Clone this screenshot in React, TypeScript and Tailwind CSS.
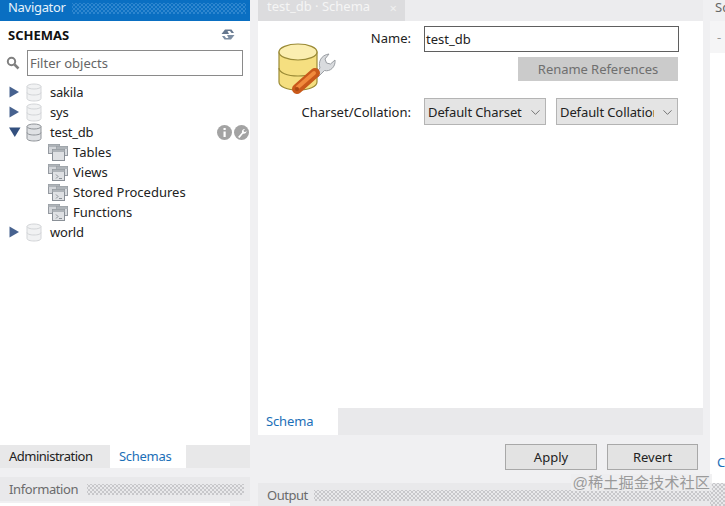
import { ChevronDown } from "lucide-react";

const dots =
  "bg-[radial-gradient(#c6c6c8_0.7px,transparent_0.8px),radial-gradient(#c6c6c8_0.7px,transparent_0.8px)] bg-[length:4px_4px] bg-[position:0_0,2px_2px]";

const blueDots =
  "bg-[radial-gradient(#3188d0_0.7px,transparent_0.8px),radial-gradient(#3188d0_0.7px,transparent_0.8px)] bg-[length:4px_4px] bg-[position:0_0,2px_2px]";

function Arrow({ open }: { open?: boolean }) {
  return (
    <svg width="12" height="12" viewBox="0 0 12 12" className="shrink-0">
      {open ? <path d="M0 1.5h11.5L5.8 11z" fill="#33507f" /> : <path d="M0.500 0.500v11L10 6z" fill="#47628f" />}
    </svg>
  );
}

function Db({ active }: { active?: boolean }) {
  const stroke = active ? "#8f9398" : "#d3d5d8";
  const fill = active ? "#dfe1e4" : "#f1f2f3";
  return (
    <svg width="16" height="19" viewBox="0 0 16 19" className="shrink-0">
      <path d="M1 3.5v12c0 1.5 3 2.5 7 2.5s7-1 7-2.5v-12z" fill={fill} stroke={stroke} />
      <ellipse cx="8" cy="3.5" rx="7" ry="2.5" fill={fill} stroke={stroke} />
      <path d="M1 9.5c0 1.5 3 2.5 7 2.5s7-1 7-2.5" fill="none" stroke={stroke} />
    </svg>
  );
}

function Folder({ glyph }: { glyph?: boolean }) {
  return (
    <svg width="20" height="17" viewBox="0 0 20 17" className="shrink-0">
      <rect x="0.5" y="0.5" width="11" height="9" fill="#d2d5d9" stroke="#959aa1" />
      <rect x="0.5" y="0.5" width="11" height="2.5" fill="#aeb3b8" />
      <rect x="8.5" y="2.5" width="11" height="9" fill="#d9dce0" stroke="#959aa1" />
      <rect x="8.5" y="2.5" width="11" height="2.5" fill="#aeb3b8" />
      <rect x="4.5" y="5.5" width="12" height="11" fill="#dfe1e4" stroke="#8a9097" />
      <rect x="4.5" y="5.5" width="12" height="2.5" fill="#aeb3b8" />
      {glyph && <path d="M8 10.5l2 2-2 2M11 14.5h3" fill="none" stroke="#8a9097" />}
    </svg>
  );
}

function SchemaIcon() {
  return (
    <svg width="58" height="52" viewBox="0 0 58 52">
      <path d="M1 9v30c0 4.500 8 8 19 8s19-3.500 19-8V9z" fill="#f5df80" stroke="#9a8a35" strokeWidth="1.200" />
      <ellipse cx="20" cy="9" rx="19" ry="8" fill="#fbeeb0" stroke="#9a8a35" strokeWidth="1.200" />
      <path d="M1 25c0 4.500 8 8 19 8s19-3.500 19-8" fill="none" stroke="#9a8a35" strokeWidth="1.200" />
      <path
        d="M35 33l7-8c-2-6 1-13 9-14l-4 5 1.500 4 4 1 4.500-4c.8 7-5 12-10.500 10.500l-7 7z"
        fill="#d9dbde"
        stroke="#9a9ea3"
      />
      <path d="M19 46l18-16" stroke="#c9591a" strokeWidth="10" strokeLinecap="round" />
      <path d="M20 44l16-14" stroke="#f08a3c" strokeWidth="4" strokeLinecap="round" />
      <circle cx="19" cy="46" r="2" fill="#a84812" />
    </svg>
  );
}

function TreeRow({ name, open, icons }: { name: string; open?: boolean; icons?: boolean }) {
  return (
    <div className="flex h-5 items-center pl-[9px] pr-px">
      <Arrow open={open} />
      <span className="ml-[5px]">
        <Db active={open} />
      </span>
      <span className="ml-2 flex-1 tracking-[-0.2px]">{name}</span>
      {icons && (
        <span className="flex gap-[2px]">
          <svg width="15" height="15" viewBox="0 0 15 15">
            <circle cx="7.500" cy="7.500" r="7.500" fill="#a3a3a3" />
            <path d="M6.500 3h2.200v2H6.500zM6.500 6.500h2.200V12H6.500z" fill="#fff" />
          </svg>
          <svg width="15" height="15" viewBox="0 0 15 15">
            <circle cx="7.500" cy="7.500" r="7.500" fill="#a3a3a3" />
            <path d="M4 12l4-4.500c-.5-2 1-3.800 3.200-3.500L9.500 5.500l.5 1.200 1.300.3 1.200-1.300c.2 2-1.500 3.500-3.500 3L5.500 13z" fill="#fff" />
          </svg>
        </span>
      )}
    </div>
  );
}

function ChildRow({ name, glyph }: { name: string; glyph?: boolean }) {
  return (
    <div className="flex h-5 items-center pl-12">
      <Folder glyph={glyph} />
      <span className="ml-[5px]">{name}</span>
    </div>
  );
}

function FakeSelect({ label }: { label: string }) {
  return (
    <div className="flex h-[27px] w-[122px] items-center border border-[#b4b4b4] bg-[#e4e4e4] pl-[3px] pr-[2px] pt-px">
      <span className="flex-1 overflow-hidden whitespace-nowrap tracking-[-0.1px]">{label}</span>
      <ChevronDown size={15} strokeWidth={1.25} className="ml-[6px] shrink-0 text-[#555]" />
    </div>
  );
}

export default function App() {
  return (
    <div className="relative flex h-[506px] w-[725px] overflow-hidden bg-[#f0f0f2] font-['Noto_Sans',sans-serif] text-[13px] leading-none text-[#222]">
      {/* navigator */}
      <aside className="flex h-full w-[250px] shrink-0 flex-col">
        <div className="flex h-[21px] shrink-0 items-start gap-[6px] bg-[#0a6fc2] pl-2 pr-1 pt-px text-[#e6f2fb]">
          <span className="tracking-[-0.3px]">Navigator</span>
          <div className={`mt-[2px] h-[11px] flex-1 ${blueDots}`} />
        </div>
        <div className="flex flex-1 flex-col bg-white">
          <div className="flex h-[29px] items-center justify-between pl-2 pr-[15px]">
            <span className="font-bold text-[#111]">SCHEMAS</span>
            <svg width="14" height="13" viewBox="0 0 14 13" className="-mt-[3px]">
              <path d="M0.500 6L4 1.500h6.500L13 5h-2.500L9 3H6.500L8 6z" fill="#66788f" />
              <path d="M13.500 7L10 11.500H3.500L1 8h2.500L5 10h2.500L6 7z" fill="#7d8ea3" />
            </svg>
          </div>
          <div className="flex items-center pl-[6px]">
            <svg width="14" height="14" viewBox="0 0 14 14" className="shrink-0">
              <circle cx="5.500" cy="5.500" r="3.700" fill="none" stroke="#808080" strokeWidth="2" />
              <path d="M8.500 8.500L12.500 12.500" stroke="#808080" strokeWidth="2.500" />
            </svg>
            <div className="ml-[7px] flex h-[26px] w-[216px] items-center border border-[#8a8a8a] px-[2px] text-[#666]">
              Filter objects
            </div>
          </div>
          <div className="mt-[6px]">
            <TreeRow name="sakila" />
            <TreeRow name="sys" />
            <TreeRow name="test_db" open icons />
            <ChildRow name="Tables" />
            <ChildRow name="Views" glyph />
            <ChildRow name="Stored Procedures" glyph />
            <ChildRow name="Functions" glyph />
            <TreeRow name="world" />
          </div>
        </div>
        <div className="flex h-[23px] shrink-0 bg-[#e8e8e9]">
          <div className="flex w-[110px] items-center pl-[9px] tracking-[-0.5px]">Administration</div>
          <div className="flex w-[76px] items-center bg-white pl-[9px] tracking-[-0.3px] text-[#1c6fb8]">Schemas</div>
        </div>
        <div className="mt-[9px] flex h-6 shrink-0 items-center gap-[9px] bg-[#e9e9eb] pl-[9px] pr-[6px] text-[#6b6b6b]">
          <span className="tracking-[-0.4px]">Information</span>
          <div className={`h-[11px] flex-1 ${dots}`} />
        </div>
        <div className="mt-[2px] h-[3px] w-[230px] shrink-0 bg-white" />
      </aside>

      {/* editor */}
      <main className="ml-2 flex h-full w-[452px] shrink-0 flex-col">
        <div className="flex h-[21px] w-[445px] shrink-0 bg-[#ececee]">
          <div className="flex w-[147px] items-start justify-between bg-[#dcdcde] pl-[9px] pr-2 text-[#f5f5f5]">
            <span>test_db · Schema</span>
            <span className="mt-[2px] text-[#f0f0f0]">×</span>
          </div>
        </div>
        <div className="w-[445px] flex-1 bg-white pl-5 pt-[5px]">
          <div className="grid grid-cols-[58px_75px_268px] items-start">
            <div className="row-span-2 mt-[17px] h-[38px]">
              <SchemaIcon />
            </div>
            <div className="mt-[6px] text-right">Name:</div>
            <div className="ml-[13px] flex h-[26px] items-center border border-[#5f5f5f] pl-px">test_db</div>
            <div className="col-start-3 ml-[107px] mt-[5px] flex h-6 w-[160px] items-center justify-center bg-[#cbcbcb] tracking-[-0.05px] text-[#6f6f6f]">
              Rename References
            </div>
            <div className="col-span-2 mt-[25px] text-right">Charset/Collation:</div>
            <div className="ml-[13px] mt-[17px] flex w-[254px] justify-between">
              <FakeSelect label="Default Charset" />
              <FakeSelect label="Default Collation" />
            </div>
          </div>
        </div>
        <div className="flex h-[27px] w-[445px] shrink-0 bg-[#e9e9eb]">
          <div className="flex w-20 items-center bg-white pl-2 tracking-[-0.15px] text-[#1c6fb8]">Schema</div>
        </div>
        <div className="flex h-12 w-[445px] shrink-0 justify-end gap-[10px] bg-[#f0f0f2] pr-[5px] pt-[9px]">
          <div className="flex h-[26px] w-[92px] items-center justify-center border border-[#a8a8a8] bg-[#e3e3e3]">Apply</div>
          <div className="flex h-[26px] w-[91px] items-center justify-center border border-[#a8a8a8] bg-[#e3e3e3]">Revert</div>
        </div>
        <div className="flex h-[23px] shrink-0 items-center gap-[6px] bg-[#e9e9eb] pl-[9px] pt-[2px] text-[#6b6b6b]">
          <span className="tracking-[-0.5px]">Output</span>
          <div className={`h-[11px] flex-1 ${dots}`} />
        </div>
      </main>

      {/* right sidebar, cut off by the window */}
      <aside className="flex h-full flex-1 flex-col">
        <div className="flex h-[21px] shrink-0 items-start bg-[#f0f0f2] pl-[5px] pt-px text-[#666]">Sc</div>
        <div className="flex h-[32px] shrink-0 items-center bg-[#f5f5f6] pl-[7px] text-[#999]">-</div>
        <div className="flex flex-1 flex-col justify-end bg-white">
          <div className="flex h-[27px] items-start pl-[7px] text-[#1c6fb8]">C</div>
        </div>
        <div className={`h-[23px] shrink-0 bg-[#e9e9eb] ${dots}`} />
      </aside>

      {/* watermark */}
      <span className="absolute right-[13px] top-[474px] bg-[#eeeeef]/80 px-[2px] py-[1px] font-['Liberation_Sans','Noto_Sans_CJK_SC',sans-serif] text-[15.250px] text-[#9a9a9a]">
        @稀土掘金技术社区
      </span>
    </div>
  );
}
